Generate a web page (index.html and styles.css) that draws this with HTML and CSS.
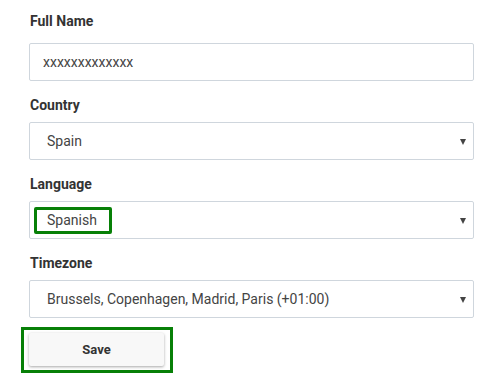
FILE: index.html
```html
<!DOCTYPE html>
<html lang="en">
<head>
    <meta charset="UTF-8">
    <meta name="viewport" content="width=device-width, initial-scale=1.0">
    <title>Profile Settings</title>
    <link rel="stylesheet" href="styles.css">
</head>
<body>
    <form class="settings">
        <div class="field first">
            <label for="fullname">Full Name</label>
            <input type="text" id="fullname" class="box text-input" value="xxxxxxxxxxxxx">
        </div>

        <div class="field">
            <label>Country</label>
            <div class="box select">
                <span class="value">Spain</span>
                <span class="arrow"></span>
            </div>
        </div>

        <div class="field">
            <label>Language</label>
            <div class="box select">
                <span class="value marked">Spanish</span>
                <span class="arrow"></span>
            </div>
        </div>

        <div class="field">
            <label>Timezone</label>
            <div class="box select">
                <span class="value">Brussels, Copenhagen, Madrid, Paris (+01:00)</span>
                <span class="arrow"></span>
            </div>
        </div>

        <div class="actions">
            <button type="button" class="save">Save</button>
        </div>
    </form>
</body>
</html>
```

FILE: styles.css
```css
body { margin: 0; font-family: Roboto, "Liberation Sans", Arial, sans-serif; color: #333; background: #fff; }
.settings { padding: 11px 12px 0 29px; }
.field { display: flex; flex-direction: column; margin-bottom: 14px; }
.field label { display: block; font-size: 14px; font-weight: bold; line-height: 20px; color: #333; margin: 0 0 7px 1px; }
.field.first label { margin-bottom: 12px; }
.box { box-sizing: border-box; height: 38px; border: 1px solid #cfd6dd; border-radius: 2px; background: #fff; font-family: inherit; font-size: 14px; color: #444; }
.text-input { width: 100%; padding: 0 13px; outline: none; }
.select { display: flex; align-items: center; justify-content: space-between; padding: 0 7px 0 4px; }
.value { display: inline-block; box-sizing: border-box; height: 27px; line-height: 21px; padding: 0 12px 0 10px; border: 3px solid transparent; border-radius: 2px; white-space: nowrap; }
.value.marked { border-color: #078007; }
.arrow { width: 0; height: 0; border-left: 3px solid transparent; border-right: 3px solid transparent; border-top: 6px solid #444; margin-top: 1px; }
.actions { display: inline-block; margin: -5px 0 0 -8px; padding: 3px 6px 4px 5px; border: 3px solid #078007; }
.save { display: block; width: 135px; height: 33px; border: none; border-radius: 2px; background: #f8f8f8; box-shadow: 0 1px 3px rgba(0, 0, 0, 0.35); font-family: inherit; font-size: 13px; font-weight: bold; color: #333; cursor: pointer; }
```
